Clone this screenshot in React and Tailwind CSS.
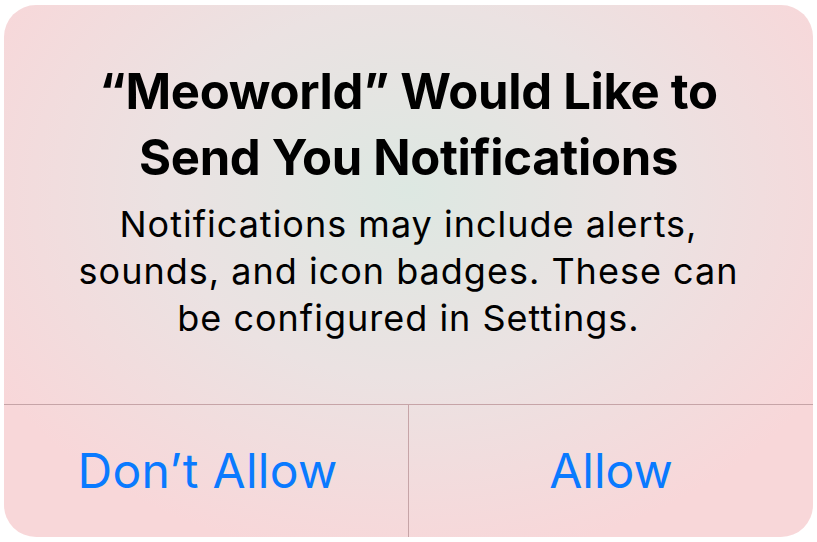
export default function App() {
  return (
    <div className="w-[817px] h-[542px] bg-white pt-[5px] pl-[4px]" style={{ fontFamily: "Inter, 'Noto Sans', sans-serif" }}>
      <div className="w-[809px] h-[532px] rounded-[32px] overflow-hidden flex flex-col bg-[radial-gradient(ellipse_60%_70%_at_50%_35%,#dde8e2_0%,#ebe2e2_50%,#f8d7d9_100%)]">
        <div className="h-[399px] flex flex-col items-center pt-[54px] text-black text-center">
          <div className="text-[49px] font-bold leading-[66px] tracking-[-0.3px]">
            <div>“Meoworld” Would Like to</div>
            <div>Send You Notifications</div>
          </div>
          <div className="text-[36px] leading-[47px] mt-[10px] tracking-[1px]">
            <div>Notifications may include alerts,</div>
            <div>sounds, and icon badges. These can</div>
            <div>be configured in Settings.</div>
          </div>
        </div>
        <div className="h-px bg-[#c6a4a7]" />
        <div className="flex-1 flex">
          <div className="flex-1 min-w-0 flex items-center justify-center text-[48px] text-[#0a7aff] tracking-[0.3px]">
            <span className="ml-[3px]">Don’t Allow</span>
          </div>
          <div className="w-px bg-[#c6a4a7]" />
          <div className="flex-1 min-w-0 flex items-center justify-center text-[48px] text-[#0a7aff]">Allow</div>
        </div>
      </div>
    </div>
  );
}
